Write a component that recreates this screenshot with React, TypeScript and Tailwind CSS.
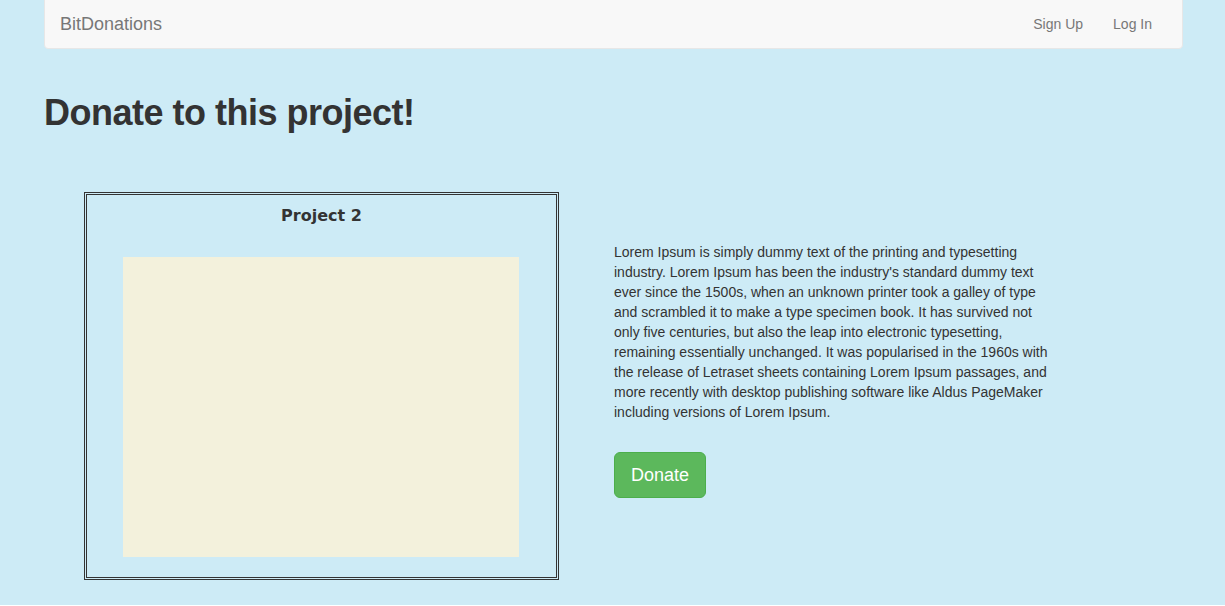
import React from 'react';

const LOREM =
  "Lorem Ipsum is simply dummy text of the printing and typesetting industry. Lorem Ipsum has been the industry's standard dummy text ever since the 1500s, when an unknown printer took a galley of type and scrambled it to make a type specimen book. It has survived not only five centuries, but also the leap into electronic typesetting, remaining essentially unchanged. It was popularised in the 1960s with the release of Letraset sheets containing Lorem Ipsum passages, and more recently with desktop publishing software like Aldus PageMaker including versions of Lorem Ipsum.";

export default function App() {
  return (
    <div className="min-h-[606px] bg-[#cdebf6] text-[#333] font-['Liberation_Sans',Arial,sans-serif]">
      <div className="pl-[44px] w-[1183px]">
        {/* Navbar */}
        <nav className="-mt-px h-[50px] flex items-center justify-between px-[15px] bg-[#f8f8f8] border border-[#e7e7e7] rounded-b-[4px]">
          <a href="#" className="text-[18px] text-[#777]">BitDonations</a>
          <div className="flex text-[14px] text-[#777]">
            <a href="#" className="px-[15px]">Sign Up</a>
            <a href="#" className="px-[15px]">Log In</a>
          </div>
        </nav>

        <h1 className="mt-[44px] text-[36px] leading-[40px] font-bold tracking-[-0.5px]">Donate to this project!</h1>

        <div className="mt-[59px] flex">
          {/* Project card */}
          <div className="ml-[40px] w-[475px] h-[388px] border-[3px] border-double border-[#333] flex flex-col">
            <h3 className="mt-[11px] text-center text-[16px] leading-[20px] font-bold font-['DejaVu_Sans',Verdana,sans-serif]">Project 2</h3>
            <div className="mt-[31px] ml-[36px] w-[396px] h-[300px] bg-[#f3f1dc]" />
          </div>

          {/* Description */}
          <div className="ml-[55px] mt-[50px] w-[445px]">
            <p className="text-[14px] leading-[20px]">{LOREM}</p>
            <button className="mt-[30px] px-4 py-[10px] text-[18px] leading-[24px] text-white bg-[#5cb85c] border border-[#4cae4c] rounded-[6px]">
              Donate
            </button>
          </div>
        </div>
      </div>
    </div>
  );
}
